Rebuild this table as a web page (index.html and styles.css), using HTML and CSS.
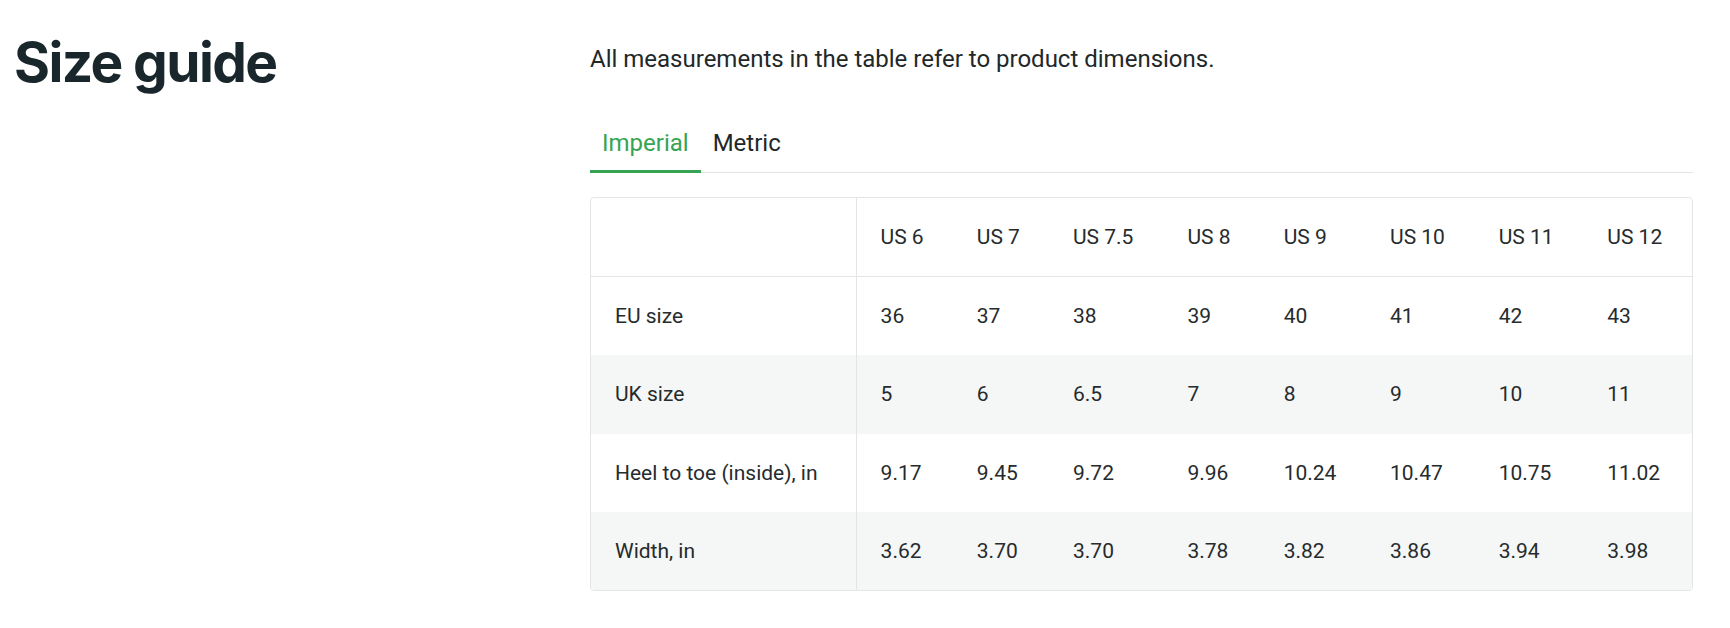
FILE: index.html
```html
<!DOCTYPE html>
<html lang="en">
<head>
<meta charset="utf-8">
<title>Size guide</title>
<link rel="stylesheet" href="styles.css">
</head>
<body>
<main class="page">
  <h1 class="title">Size guide</h1>
  <section class="content">
    <p class="intro">All measurements in the table refer to product dimensions.</p>
    <div class="tabs">
      <button class="tab tab-active">Imperial</button>
      <button class="tab">Metric</button>
    </div>
    <div class="table-wrap">
      <table class="sizes">
        <thead>
          <tr>
            <th class="label"></th>
            <th>US 6</th><th>US 7</th><th>US 7.5</th><th>US 8</th><th>US 9</th><th>US 10</th><th>US 11</th><th>US 12</th>
          </tr>
        </thead>
        <tbody>
          <tr>
            <td class="label">EU size</td>
            <td>36</td><td>37</td><td>38</td><td>39</td><td>40</td><td>41</td><td>42</td><td>43</td>
          </tr>
          <tr class="alt">
            <td class="label">UK size</td>
            <td>5</td><td>6</td><td>6.5</td><td>7</td><td>8</td><td>9</td><td>10</td><td>11</td>
          </tr>
          <tr>
            <td class="label">Heel to toe (inside), in</td>
            <td>9.17</td><td>9.45</td><td>9.72</td><td>9.96</td><td>10.24</td><td>10.47</td><td>10.75</td><td>11.02</td>
          </tr>
          <tr class="alt">
            <td class="label">Width, in</td>
            <td>3.62</td><td>3.70</td><td>3.70</td><td>3.78</td><td>3.82</td><td>3.86</td><td>3.94</td><td>3.98</td>
          </tr>
        </tbody>
      </table>
    </div>
  </section>
</main>
</body>
</html>
```

FILE: styles.css
```css
* { box-sizing: border-box; }

html, body {
  margin: 0;
  padding: 0;
  background: #ffffff;
}

body {
  font-family: Roboto, "Liberation Sans", sans-serif;
  color: #222729;
}

.page {
  display: grid;
  grid-template-columns: 576px 1103px;
  padding-left: 14px;
}

.title {
  margin: 29px 0 0 0;
  font-family: Inter, "Liberation Sans", sans-serif;
  font-weight: 700;
  font-size: 55px;
  line-height: 66px;
  letter-spacing: -1.6px;
  color: #19272c;
}

.content {
  padding-top: 45px;
}

.intro {
  margin: 0;
  font-size: 24px;
  line-height: 28px;
  color: #222729;
}

.tabs {
  display: flex;
  margin-top: 46px;
  border-bottom: 1px solid #e2e4e4;
}

.tab {
  font-family: Roboto, "Liberation Sans", sans-serif;
  font-size: 24px;
  line-height: 28px;
  padding: 10px 12px 13px;
  margin: 0 0 -1px 0;
  background: none;
  border: none;
  border-bottom: 3px solid transparent;
  color: #222729;
  cursor: pointer;
}

.tab-active {
  color: #35a452;
  border-bottom-color: #35a452;
}

.table-wrap {
  margin-top: 24px;
  border: 1px solid #e4e6e6;
  border-radius: 4px;
  overflow: hidden;
}

.sizes {
  width: 100%;
  border-collapse: collapse;
  font-size: 21px;
  line-height: 24px;
  color: #262b2d;
}

.sizes th,
.sizes td {
  padding: 27px 24px;
  text-align: left;
  font-weight: 400;
  white-space: nowrap;
}

.sizes tbody td {
  line-height: 24.25px;
}

.sizes thead th {
  border-bottom: 1px solid #e4e6e6;
}

.sizes .label {
  border-right: 1px solid #e4e6e6;
}

.sizes tr.alt {
  background: #f5f6f6;
}
```
